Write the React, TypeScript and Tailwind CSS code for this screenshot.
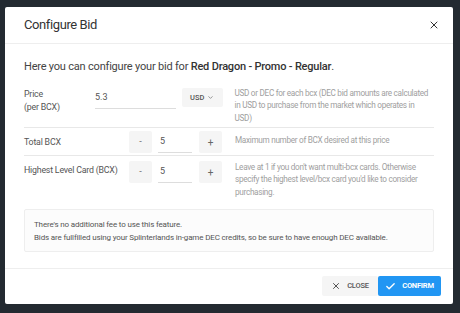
import { X, Check, ChevronDown } from "lucide-react";

const ROWS_FONT = { fontFamily: "Roboto, 'Liberation Sans', sans-serif" };

function Stepper({ value }: { value: string }) {
  return (
    <div className="flex items-center w-[106px] shrink-0">
      <button className="w-[23px] h-[22px] bg-[#f5f5f5] rounded-[2px] text-[9px] text-[#666] flex items-center justify-center">
        -
      </button>
      <div className="ml-[6px] w-[34px] h-[22px] border-b border-[#ddd] text-[9px] text-[#555] flex items-center pl-[2px]">
        {value}
      </div>
      <button className="ml-[7px] w-[23px] h-[22px] bg-[#f5f5f5] rounded-[2px] text-[10px] text-[#666] flex items-center justify-center">
        +
      </button>
    </div>
  );
}

export default function App() {
  return (
    <div className="w-[460px] h-[313px] bg-[#232a31] overflow-hidden pt-[7px] pl-[5px]" style={ROWS_FONT}>
      <div className="w-[448px] h-[297px] bg-white rounded-[2px] flex flex-col">
        {/* header */}
        <div className="h-[37px] flex items-center justify-between px-[19px] border-b border-[#eeeeee]">
          <span className="text-[13px] tracking-[-0.4px] text-[#333]">Configure Bid</span>
          <X className="w-[12px] h-[12px] text-[#333] mr-[-6px]" strokeWidth={2} />
        </div>

        {/* body */}
        <div className="px-[19px] pt-[16px]">
          <p className="text-[11px] tracking-[-0.2px] text-[#444] leading-[14px]">
            Here you can configure your bid for{" "}
            <span className="font-medium text-[#333]">Red Dragon - Promo - Regular</span>.
          </p>

          {/* price row */}
          <div className="flex mt-[10px] h-[44px] border-b border-[#e8e8e8]">
            <div className="w-[71px] shrink-0 text-[8.8px] tracking-[-0.2px] text-[#555] leading-[13px] pt-[4px]">
              Price
              <div>(per BCX)</div>
            </div>
            <div className="w-[81px] shrink-0 h-[22px] mt-[3px] border-b border-[#ddd] text-[9px] text-[#555] flex items-center">
              5.3
            </div>
            <button className="ml-[6px] w-[41px] h-[19px] mt-[4px] bg-[#f5f5f5] rounded-[2px] text-[7.5px] font-medium text-[#555] flex items-center justify-center gap-[3px]">
              USD <ChevronDown className="w-[7px] h-[7px]" strokeWidth={2} />
            </button>
            <p className="ml-[12px] w-[202px] text-[8.2px] tracking-[-0.3px] text-[#a0a0a0] leading-[12.4px] pt-[3px]">
              USD or DEC for each bcx (DEC bid amounts are calculated in USD to purchase from the market which operates in
              <br />
              USD)
            </p>
          </div>

          {/* total bcx */}
          <div className="flex h-[28px] items-start border-b border-[#e8e8e8] pt-[3px]">
            <div className="w-[105px] shrink-0 text-[8.8px] tracking-[-0.2px] text-[#555] leading-[13px] pt-[5px]">Total BCX</div>
            <Stepper value="5" />
            <p className="w-[202px] text-[8.2px] tracking-[-0.3px] text-[#a0a0a0] leading-[12.4px] pt-[3px]">
              Maximum number of BCX desired at this price
            </p>
          </div>

          {/* highest level */}
          <div className="flex items-start pt-[5px]">
            <div className="w-[105px] shrink-0 text-[8.8px] tracking-[-0.2px] text-[#555] leading-[13px] pt-[3px]">
              Highest Level Card (BCX)
            </div>
            <Stepper value="5" />
            <p className="w-[202px] text-[8.2px] tracking-[-0.3px] text-[#a0a0a0] leading-[12.4px]">
              Leave at 1 if you don't want multi-bcx cards. Otherwise specify the highest level/bcx card you'd like to consider purchasing.
            </p>
          </div>

          {/* info */}
          <div className="mt-[11px] h-[43px] bg-[#fcfcfc] border border-[#eeeeee] rounded-[2px] px-[9px] pt-[8px] text-[8px] tracking-[-0.15px] text-[#555] leading-[13px]">
            <div>There's no additional fee to use this feature.</div>
            <div>Bids are fullfilled using your Splinterlands in-game DEC credits, so be sure to have enough DEC available.</div>
          </div>
        </div>

        {/* footer */}
        <div className="mt-auto h-[36px] border-t border-[#eeeeee] flex items-start justify-end pr-[12px] pt-[7px]">
          <button className="w-[56px] h-[20px] bg-[#f5f5f5] rounded-[2px] flex items-center justify-center gap-[6px] text-[7.5px] tracking-[-0.2px] font-medium text-[#555]">
            <X className="w-[10px] h-[10px] text-[#333]" strokeWidth={2} />
            CLOSE
          </button>
          <button className="w-[63px] h-[20px] bg-[#2196f3] rounded-[2px] flex items-center justify-center gap-[6px] text-[7.5px] tracking-[-0.2px] font-bold text-white">
            <Check className="w-[11px] h-[11px]" strokeWidth={3} />
            CONFIRM
          </button>
        </div>
      </div>
    </div>
  );
}
